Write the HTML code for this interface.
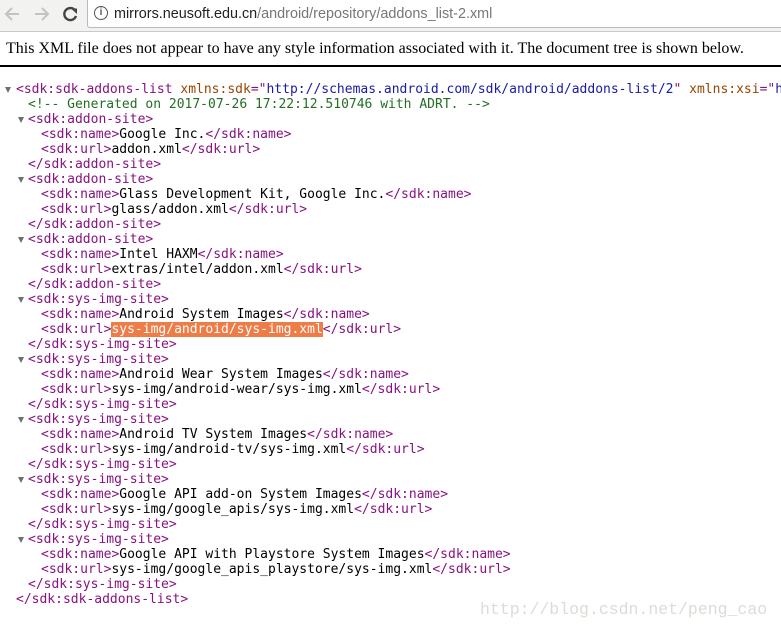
<!DOCTYPE html>
<html><head><meta charset="utf-8"><style>
body{margin:0;width:781px;height:633px;overflow:hidden;background:#fff;position:relative}
.bar{position:absolute;left:0;top:0;width:781px;height:31px;background:#f2f2f1;border-bottom:1px solid #c9c9c9}
.addr{position:absolute;left:87px;top:-1px;width:710px;height:27px;background:#fff;border:1px solid #b9b9b9;border-radius:0 0 0 3px;font:14.4px "Liberation Sans",sans-serif;line-height:28px}
.addr .u{position:absolute;left:26px;top:0;color:#222;white-space:nowrap}
.addr .u span{color:#777}
.info{position:absolute;left:6px;top:6px;width:12px;height:12px;border:1.5px solid #555;border-radius:50%;font:bold 10px "Liberation Sans";line-height:12px;text-align:center;color:#555}
.msg{position:absolute;left:6px;top:40px;font:16px "Liberation Serif",serif;white-space:nowrap;color:#000}
.rule{position:absolute;left:0;top:65px;width:781px;height:2px;background:#000}
.x{position:absolute;left:0;top:82px;width:781px;height:540px;overflow:hidden;font:13px "DejaVu Sans Mono",monospace}
.x div{position:absolute;height:15px;line-height:15px;white-space:pre}
.t{color:#881280}.a{color:#994500}.v{color:#1a1aa6}.c{color:#236e25}
.ar{position:absolute;width:0;height:0;border-left:3.5px solid transparent;border-right:3.5px solid transparent;border-top:6px solid #6e6e6e}
.hl{background:#ee7c47;color:#fff}
.wm{position:absolute;left:480px;top:600px;font:16.5px "Liberation Mono",monospace;color:#dcdcd6;white-space:nowrap}
</style></head><body>
<div class="bar">
<svg width="90" height="30" style="position:absolute;left:0;top:0">
<path d="M19 14H7M12 8L6 14L12 20" stroke="#c3c3c3" stroke-width="2" fill="none"/>
<path d="M35 14H47M42 8L48 14L42 20" stroke="#c3c3c3" stroke-width="2" fill="none"/>
<path d="M75.5 11A6 6 0 1 0 76 16" stroke="#444" stroke-width="2.4" fill="none"/>
<path d="M71 8.5L77 8.5L77 14Z" fill="#444"/>
</svg>
<div class="addr"><div class="info">i</div><div class="u">mirrors.neusoft.edu.cn<span>/android/repository/addons_list-2.xml</span></div></div>
</div>
<div class="msg">This XML file does not appear to have any style information associated with it. The document tree is shown below.</div>
<div class="rule"></div>
<div class="x">
<span class="ar" style="left:5px;top:5px"></span>
<div style="left:16px;top:0"><span class="t">&lt;sdk:sdk-addons-list</span> <span class="a">xmlns:sdk</span><span class="t">="</span><span class="v">http://schemas.android.com/sdk/android/addons-list/2</span><span class="t">"</span> <span class="a">xmlns:xsi</span><span class="t">="</span><span class="v">http://www.w3.org/2001/XMLSchema-instance</span><span class="t">"&gt;</span></div>
<div style="left:28px;top:15px"><span class="c">&lt;!-- Generated on 2017-07-26 17:22:12.510746 with ADRT. --&gt;</span></div>

<span class="ar" style="left:18px;top:35px"></span>
<div style="left:28px;top:30px"><span class="t">&lt;sdk:addon-site&gt;</span></div>
<div style="left:41px;top:45px"><span class="t">&lt;sdk:name&gt;</span>Google Inc.<span class="t">&lt;/sdk:name&gt;</span></div>
<div style="left:41px;top:60px"><span class="t">&lt;sdk:url&gt;</span>addon.xml<span class="t">&lt;/sdk:url&gt;</span></div>
<div style="left:28px;top:75px"><span class="t">&lt;/sdk:addon-site&gt;</span></div>

<span class="ar" style="left:18px;top:95px"></span>
<div style="left:28px;top:90px"><span class="t">&lt;sdk:addon-site&gt;</span></div>
<div style="left:41px;top:105px"><span class="t">&lt;sdk:name&gt;</span>Glass Development Kit, Google Inc.<span class="t">&lt;/sdk:name&gt;</span></div>
<div style="left:41px;top:120px"><span class="t">&lt;sdk:url&gt;</span>glass/addon.xml<span class="t">&lt;/sdk:url&gt;</span></div>
<div style="left:28px;top:135px"><span class="t">&lt;/sdk:addon-site&gt;</span></div>

<span class="ar" style="left:18px;top:155px"></span>
<div style="left:28px;top:150px"><span class="t">&lt;sdk:addon-site&gt;</span></div>
<div style="left:41px;top:165px"><span class="t">&lt;sdk:name&gt;</span>Intel HAXM<span class="t">&lt;/sdk:name&gt;</span></div>
<div style="left:41px;top:180px"><span class="t">&lt;sdk:url&gt;</span>extras/intel/addon.xml<span class="t">&lt;/sdk:url&gt;</span></div>
<div style="left:28px;top:195px"><span class="t">&lt;/sdk:addon-site&gt;</span></div>

<span class="ar" style="left:18px;top:215px"></span>
<div style="left:28px;top:210px"><span class="t">&lt;sdk:sys-img-site&gt;</span></div>
<div style="left:41px;top:225px"><span class="t">&lt;sdk:name&gt;</span>Android System Images<span class="t">&lt;/sdk:name&gt;</span></div>
<div style="left:41px;top:240px"><span class="t">&lt;sdk:url&gt;</span><span class="hl">sys-img/android/sys-img.xml</span><span class="t">&lt;/sdk:url&gt;</span></div>
<div style="left:28px;top:255px"><span class="t">&lt;/sdk:sys-img-site&gt;</span></div>

<span class="ar" style="left:18px;top:275px"></span>
<div style="left:28px;top:270px"><span class="t">&lt;sdk:sys-img-site&gt;</span></div>
<div style="left:41px;top:285px"><span class="t">&lt;sdk:name&gt;</span>Android Wear System Images<span class="t">&lt;/sdk:name&gt;</span></div>
<div style="left:41px;top:300px"><span class="t">&lt;sdk:url&gt;</span>sys-img/android-wear/sys-img.xml<span class="t">&lt;/sdk:url&gt;</span></div>
<div style="left:28px;top:315px"><span class="t">&lt;/sdk:sys-img-site&gt;</span></div>

<span class="ar" style="left:18px;top:335px"></span>
<div style="left:28px;top:330px"><span class="t">&lt;sdk:sys-img-site&gt;</span></div>
<div style="left:41px;top:345px"><span class="t">&lt;sdk:name&gt;</span>Android TV System Images<span class="t">&lt;/sdk:name&gt;</span></div>
<div style="left:41px;top:360px"><span class="t">&lt;sdk:url&gt;</span>sys-img/android-tv/sys-img.xml<span class="t">&lt;/sdk:url&gt;</span></div>
<div style="left:28px;top:375px"><span class="t">&lt;/sdk:sys-img-site&gt;</span></div>

<span class="ar" style="left:18px;top:395px"></span>
<div style="left:28px;top:390px"><span class="t">&lt;sdk:sys-img-site&gt;</span></div>
<div style="left:41px;top:405px"><span class="t">&lt;sdk:name&gt;</span>Google API add-on System Images<span class="t">&lt;/sdk:name&gt;</span></div>
<div style="left:41px;top:420px"><span class="t">&lt;sdk:url&gt;</span>sys-img/google_apis/sys-img.xml<span class="t">&lt;/sdk:url&gt;</span></div>
<div style="left:28px;top:435px"><span class="t">&lt;/sdk:sys-img-site&gt;</span></div>

<span class="ar" style="left:18px;top:455px"></span>
<div style="left:28px;top:450px"><span class="t">&lt;sdk:sys-img-site&gt;</span></div>
<div style="left:41px;top:465px"><span class="t">&lt;sdk:name&gt;</span>Google API with Playstore System Images<span class="t">&lt;/sdk:name&gt;</span></div>
<div style="left:41px;top:480px"><span class="t">&lt;sdk:url&gt;</span>sys-img/google_apis_playstore/sys-img.xml<span class="t">&lt;/sdk:url&gt;</span></div>
<div style="left:28px;top:495px"><span class="t">&lt;/sdk:sys-img-site&gt;</span></div>
<div style="left:16px;top:510px"><span class="t">&lt;/sdk:sdk-addons-list&gt;</span></div>
</div>
<div class="wm">http://blog.csdn.net/peng_cao</div>
</body></html>
